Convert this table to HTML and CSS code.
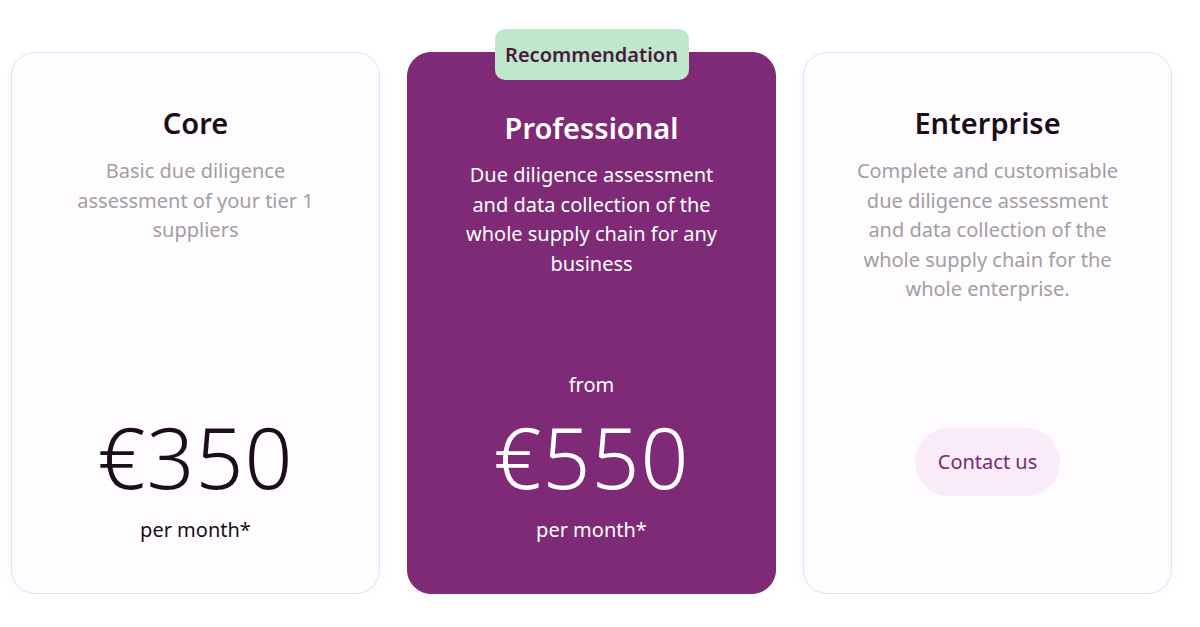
FILE: index.html
```html
<!DOCTYPE html>
<html lang="en">
<head>
<meta charset="utf-8">
<title>Pricing</title>
<link rel="stylesheet" href="styles.css">
</head>
<body>
<main class="plans">
  <section class="card">
    <div class="card-top">
      <h2 class="title">Core</h2>
      <p class="desc">Basic due diligence assessment of your tier 1 suppliers</p>
    </div>
    <div class="card-bottom">
      <div class="price">€350</div>
      <div class="per">per month*</div>
    </div>
  </section>
  <section class="card card-featured">
    <div class="badge">Recommendation</div>
    <div class="card-top featured-top">
      <h2 class="title">Professional</h2>
      <p class="desc">Due diligence assessment and data collection of the whole supply chain for any business</p>
    </div>
    <div class="card-bottom">
      <div class="from">from</div>
      <div class="price">€550</div>
      <div class="per">per month*</div>
    </div>
  </section>
  <section class="card">
    <div class="card-top">
      <h2 class="title">Enterprise</h2>
      <p class="desc">Complete and customisable due diligence assessment and data collection of the whole supply chain for the whole enterprise.</p>
    </div>
    <div class="card-bottom contact-bottom">
      <a class="contact" href="#">Contact us</a>
    </div>
  </section>
</main>
</body>
</html>
```
FILE: styles.css
```css
* { box-sizing: border-box; }
html, body {
  margin: 0;
  padding: 0;
  background: #ffffff;
  font-family: "Noto Sans", "Liberation Sans", sans-serif;
}
.plans {
  display: grid;
  grid-template-columns: 369px 369px 369px;
  column-gap: 27px;
  padding: 52px 0 0 11px;
}
.card {
  position: relative;
  height: 542px;
  border: 1px solid #ecdcf7;
  border-radius: 24px;
  background: #fefcfe;
  display: flex;
  flex-direction: column;
  align-items: center;
  text-align: center;
  box-shadow: 0 4px 14px rgba(120, 80, 140, 0.03);
}
.card-featured {
  background: #7e2a76;
  border-color: #7e2a76;
  color: #ffffff;
}
.badge {
  position: absolute;
  top: -24px;
  left: 50%;
  transform: translateX(-50%);
  width: 194px;
  height: 51px;
  line-height: 51px;
  border-radius: 10px;
  background: #bfe7cb;
  color: #4a1a40;
  font-size: 20px;
  font-weight: 600;
}
.card-top {
  padding: 50px 40px 0;
  display: flex;
  flex-direction: column;
  align-items: center;
}
.featured-top { padding-top: 55px; }
.title {
  margin: 0;
  font-size: 29px;
  line-height: 40px;
  font-weight: 600;
  color: #1b0d1a;
}
.card-featured .title { color: #ffffff; }
.desc {
  margin: 13px 0 0;
  font-size: 20px;
  line-height: 29.5px;
  color: #a39ea3;
  max-width: 270px;
}
.card-featured .desc { color: #ffffff; margin-top: 12px; max-width: 260px; }
.card-bottom {
  margin-top: auto;
  padding-bottom: 48px;
  display: flex;
  flex-direction: column;
  align-items: center;
}
.from {
  font-size: 20px;
  line-height: 30px;
  margin-bottom: 14px;
}
.price {
  font-size: 84px;
  font-weight: 300;
  line-height: 86px;
  color: #1b0d1a;
  letter-spacing: 1px;
}
.card-featured .price { color: #ffffff; }
.per {
  margin-top: 15px;
  font-size: 20px;
  line-height: 30px;
  color: #1b0d1a;
}
.card-featured .per { color: #ffffff; }
.contact-bottom { padding-bottom: 97px; }
.contact {
  display: inline-block;
  width: 145px;
  height: 68px;
  line-height: 68px;
  border-radius: 34px;
  background: #f9ebf7;
  color: #7a2a72;
  font-size: 20px;
  text-decoration: none;
}
```
